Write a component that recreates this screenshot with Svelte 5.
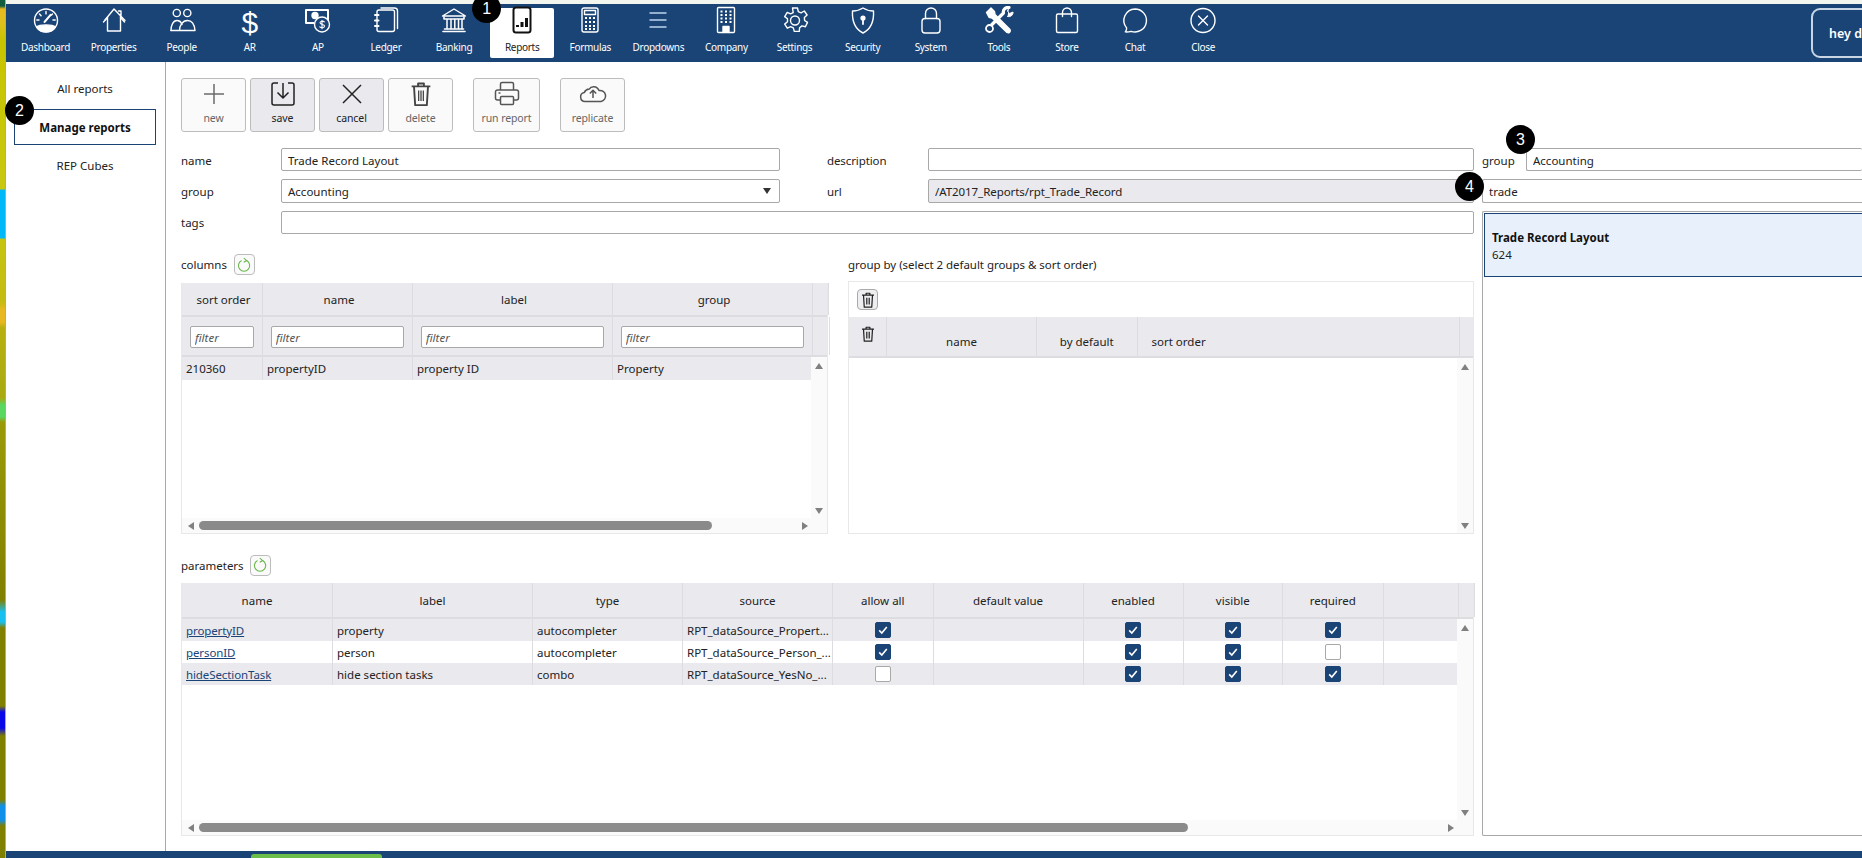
<script lang="ts">
  const navItems = ['Dashboard', 'Properties', 'People', 'AR', 'AP', 'Ledger', 'Banking', 'Reports', 'Formulas', 'Dropdowns', 'Company', 'Settings', 'Security', 'System', 'Tools', 'Store', 'Chat', 'Close'];

  const columnCols = [81, 150, 200, 200];
  const columnHead = ['sort order', 'name', 'label', 'group'];
  const columnRow = ['210360', 'propertyID', 'property ID', 'Property'];

  const groupCols = [150, 100.5, 322.5];

  const paramCols = [151, 200, 150, 150, 100.5, 150, 100, 99.5, 100.5, 75.5];
  const paramHead = ['name', 'label', 'type', 'source', 'allow all', 'default value', 'enabled', 'visible', 'required', ''];
  const params = [
    { name: 'propertyID', label: 'property', type: 'autocompleter', source: 'RPT_dataSource_Propert...', allow: true, enabled: true, visible: true, required: true },
    { name: 'personID', label: 'person', type: 'autocompleter', source: 'RPT_dataSource_Person_...', allow: true, enabled: true, visible: true, required: false },
    { name: 'hideSectionTask', label: 'hide section tasks', type: 'combo', source: 'RPT_dataSource_YesNo_...', allow: false, enabled: true, visible: true, required: true }
  ];

  function cols(list: number[]) {
    return list.map((c) => c + 'px').join(' ');
  }
</script>

{#snippet trash(size = 24)}
  <svg width={size} height={size} viewBox="0 0 24 24" fill="none" stroke="currentColor" stroke-width="1.6">
    <path d="M4 5.5h16M9.5 5.5V3h5v2.5M6 5.5l1 16h10l1-16" stroke-linejoin="round" />
    <path d="M10 9v9M12 9v9M14 9v9" stroke-width="1.1" />
  </svg>
{/snippet}

{#snippet refresh()}
  <button class="refresh" aria-label="refresh">
    <svg width="14" height="16" viewBox="0 0 14 16" fill="none" stroke="#6cb84f" stroke-width="1.1">
      <path d="M4.5 3.6A5.6 5.6 0 1 0 9.6 3.6" />
      <path d="M6.8 1.2l2.9 2.4-3 1.6" />
    </svg>
  </button>
{/snippet}

{#snippet check(on: boolean)}
  <span class="check" class:on>
    {#if on}
      <svg width="12" height="12" viewBox="0 0 12 12" fill="none" stroke="#fff" stroke-width="1.6"><path d="M2.2 6.4l2.6 2.6 5-6" /></svg>
    {/if}
  </span>
{/snippet}

{#snippet hbar(left: number, thumb: number)}
  <div class="hbar">
    <span class="arr to-left"></span>
    <span class="thumb" style="margin-left: {left}px; width: {thumb}px"></span>
    <span class="arr to-right"></span>
  </div>
{/snippet}

{#snippet navIcon(name: string)}
  {#if name === 'AR'}
    <span class="dollar">$</span>
  {:else}
    <svg width="32" height="28" viewBox="0 0 32 28" fill="none" stroke="currentColor" stroke-width="1.4" stroke-linejoin="round" stroke-linecap="round">
      {#if name === 'Dashboard'}
        <circle cx="16" cy="14" r="11.5" />
        <path d="M6.6 20.5c3-2.8 15.8-2.8 18.8 0A11.5 11.5 0 0 1 6.6 20.5z" fill="currentColor" />
        <path d="M14.6 15.4l6-7" stroke-width="2.2" />
        <path d="M16 5v2.4M9.5 7.5l1.6 1.7M22.5 7.5l-1 1M6.8 13.5h2.2M25.2 13.5H23" />
      {:else if name === 'Properties'}
        <path d="M7 13.5L16 2.5l11 11.5M9.5 11v13.5h13V8M23 9V4.5h-2.5" />
        <path d="M5.5 15.5L9.5 11M26.5 15.5L22.5 11" />
      {:else if name === 'People'}
        <circle cx="10.8" cy="6.5" r="3.6" />
        <circle cx="21.3" cy="6.5" r="3.6" />
        <path d="M5 24c0-5 2-10 6-10s4 2 5 4" />
        <path d="M5 24h9M13.5 24c0-5 3-10 8-10s7 5 7.5 10z" />
      {:else if name === 'AP'}
        <path d="M4 3.5h22v14h-5M4 3.5v13h8" stroke-width="2" />
        <circle cx="13" cy="9" r="3" fill="currentColor" />
        <circle cx="20" cy="18" r="7.5" fill="#1a4476" />
        <path d="M22.3 15.4c-1-1.2-4.3-1-4.3.9 0 2.2 4.5 1.2 4.5 3.3 0 1.9-3.4 2.1-4.7.8M20 13.8v8.4" stroke-width="1.1" />
      {:else if name === 'Ledger'}
        <path d="M9 3.5h13.5a2 2 0 0 1 2 2V23a2 2 0 0 1-2 2H9a2 2 0 0 1-2-2V5.5a2 2 0 0 1 2-2z" />
        <path d="M11 1.5h13.5a3 3 0 0 1 3 3V22" />
        <path d="M5 8.5h3.5M5 14h3.5M5 19.5h3.5" stroke-width="2" />
      {:else if name === 'Banking'}
        <path d="M4.5 9.5L16 2.5l11.5 7z" />
        <path d="M6 10.5v2h20v-2M5 25h22M6.5 22.5h19" stroke-width="1.6" />
        <path d="M9 13v9M13 13v9M16.8 13v9M20.5 13v9M24 13v9" stroke-width="1.5" />
      {:else if name === 'Reports'}
        <rect x="7.5" y="1" width="17" height="25" rx="2.5" stroke="#111" stroke-width="2" />
        <path d="M11.5 20.5v-2M16 20.5v-5M20.5 20.5v-9" stroke="#111" stroke-width="3" stroke-linecap="butt" />
      {:else if name === 'Formulas'}
        <rect x="8" y="1.5" width="16" height="24" rx="2" />
        <rect x="10.5" y="4" width="11" height="4" />
        <path d="M11 11.5h2M15 11.5h2M19 11.5h2M11 15.5h2M15 15.5h2M19 15.5h2M11 19.5h2M15 19.5h2M19 19.5h2M11 22.5h2M15 22.5h2M19 22.5h2" stroke-width="2" stroke-linecap="butt" />
      {:else if name === 'Dropdowns'}
        <path d="M7.5 6.5h17M7.5 13.5h17M7.5 20.5h17" stroke="#bcd3ee" stroke-width="1.7" stroke-linecap="butt" />
      {:else if name === 'Company'}
        <rect x="7.5" y="1" width="17" height="25" rx="1" />
        <path d="M10.5 5h2M15 5h2M19.5 5h2M10.5 8.5h2M15 8.5h2M19.5 8.5h2M10.5 12h2M15 12h2M19.5 12h2M10.5 15.5h2M15 15.5h2M19.5 15.5h2" stroke-width="2.2" stroke-linecap="butt" />
        <path d="M13 26v-6h6v6" fill="currentColor" />
      {:else if name === 'Settings'}
        <path d="M13.5 1.5h5l.8 3.6 2.7 1.2 3.3-1.8 2.8 4-2.7 2.6.2 2.9 2.9 1.9-2.1 4.4-3.5-.9-2.3 1.9-.3 3.6h-5l-1-3.5-2.7-1.3-3.3 1.6-2.6-4.1 2.8-2.3v-3l-2.8-2.2 2.5-4.2 3.4 1.5 2.6-1.3z" />
        <circle cx="16" cy="14" r="4.5" />
      {:else if name === 'Security'}
        <path d="M16 1.5c3 2 7 3 10.5 3 .5 9-1.5 17.5-10.5 22C7 22 5 13.5 5.5 4.500c3.5 0 7.5-1 10.5-3z" />
        <circle cx="16" cy="11.5" r="1.9" fill="currentColor" />
        <path d="M16 12v5.5" stroke-width="1.8" />
      {:else if name === 'System'}
        <rect x="7" y="12" width="18" height="14.5" rx="3" />
        <path d="M10.5 12V7a5.5 5.5 0 0 1 11 0v5" />
      {:else if name === 'Tools'}
        <path d="M6 1.5l3.5 3.5.5 3 15 15a2.2 2.2 0 0 1-3 3L7 11.5l-3-.8L1.5 6z" fill="currentColor" transform="translate(2 0)" />
        <path d="M26 1c-3-.5-6.500 2-5.500 5.500L9 18" stroke-width="3.2" />
        <path d="M26 1l-1.500 3.500 2 2.500L30 5.500c.3 3-2.500 5.500-5.500 4.500" fill="currentColor" stroke-width="1" />
        <circle cx="6.5" cy="22" r="3.5" stroke-width="1.8" />
      {:else if name === 'Store'}
        <rect x="5.5" y="7.5" width="21" height="18.5" rx="1.5" />
        <path d="M11.5 10V6a4.5 4.5 0 0 1 9 0v4" />
      {:else if name === 'Chat'}
        <path d="M16 2.5a11.5 11.5 0 1 1-4 22.3c-1.9.6-3.8.9-5.7.6 1.1-1.2 1.5-2.4 1.3-4A11.5 11.5 0 0 1 16 2.5z" />
      {:else if name === 'Close'}
        <circle cx="16" cy="14" r="12" />
        <path d="M11.5 9.5l9 9M20.5 9.5l-9 9" />
      {/if}
    </svg>
  {/if}
{/snippet}

<div class="page">
  <div class="strip"></div>
  <div class="shell">
    <div class="topline"></div>
    <nav class="nav">
      {#each navItems as item}
        <div class="nav-item" class:active={item === 'Reports'}>
          {@render navIcon(item)}
          <span class="nav-label">{item}</span>
          {#if item === 'Reports'}<span class="badge b1">1</span>{/if}
        </div>
      {/each}
      <div class="hey">hey d</div>
    </nav>

    <div class="main">
      <aside class="side">
        <div class="side-item">All reports</div>
        <div class="side-item current">Manage reports<span class="badge b2">2</span></div>
        <div class="side-item">REP Cubes</div>
      </aside>

      <div class="content">
        <div class="col-main">
          <div class="toolbar">
            <button class="tool"><svg width="28" height="28" viewBox="0 0 28 28" fill="none" stroke="#6b6b6b" stroke-width="1.5"><path d="M14 4v20M4 14h20" /></svg><span>new</span></button>
            <button class="tool on"><svg width="28" height="28" viewBox="0 0 28 28" fill="none" stroke="#222" stroke-width="1.5" stroke-linejoin="round"><path d="M9 3H5a2 2 0 0 0-2 2v18a2 2 0 0 0 2 2h18a2 2 0 0 0 2-2V5a2 2 0 0 0-2-2h-4M14 3v15M8.5 12.5L14 18l5.500-5.500" /></svg><span>save</span></button>
            <button class="tool on"><svg width="28" height="28" viewBox="0 0 28 28" fill="none" stroke="#222" stroke-width="1.5"><path d="M5 5l18 18M23 5L5 23" /></svg><span>cancel</span></button>
            <button class="tool trash-tool">{@render trash(28)}<span>delete</span></button>
            <button class="tool wide gap"><svg width="28" height="28" viewBox="0 0 28 28" fill="none" stroke="#555" stroke-width="1.5" stroke-linejoin="round"><path d="M7.5 10V4A1.5 1.5 0 0 1 9 2.5h10A1.5 1.5 0 0 1 20.5 4v6M7.5 20h-3a2 2 0 0 1-2-2v-6a2 2 0 0 1 2-2h19a2 2 0 0 1 2 2v6a2 2 0 0 1-2 2h-3" /><rect x="7.5" y="16.5" width="13" height="8" rx="1" /><path d="M5.5 13h2" /></svg><span>run report</span></button>
            <button class="tool gap"><svg width="28" height="28" viewBox="0 0 28 28" fill="none" stroke="#555" stroke-width="1.5" stroke-linejoin="round"><path d="M8 21.5H6a4.5 4.5 0 0 1-.8-8.9 6 6 0 0 1 5-3.5C12 6 18 5.500 20 10.500a5.500 5.500 0 0 1 2 11zM8 21.5h12" /><path d="M14 18v-7.5M10.8 13.5L14 10.3l3.2 3.2" /></svg><span>replicate</span></button>
          </div>

          <div class="form">
            <label class="first" for="f-name">name</label>
            <input id="f-name" class="first" value="Trade Record Layout" />
            <label class="l2 first" for="f-desc">description</label>
            <input id="f-desc" />

            <label for="f-group">group</label>
            <div class="select" id="f-group">Accounting<span class="caret"></span></div>
            <label class="l2" for="f-url">url</label>
            <input id="f-url" class="ro" value="/AT2017_Reports/rpt_Trade_Record" readonly />

            <label for="f-tags">tags</label>
            <input id="f-tags" class="span3" />
          </div>

          <div class="pair">
            <section>
              <div class="caption">columns {@render refresh()}</div>
              <div class="tbl columns">
                <div class="row head tall" style="grid-template-columns: {cols(columnCols)} 16px">
                  {#each columnHead as h}<div class="cell center">{h}</div>{/each}
                  <div class="cell"></div>
                </div>
                <div class="row head filter" style="grid-template-columns: {cols(columnCols)} 16px">
                  {#each columnHead as _}<div class="cell"><input class="flt" placeholder="filter" /></div>{/each}
                  <div class="cell"></div>
                </div>
                <div class="body">
                  <div class="rows">
                    <div class="row alt" style="grid-template-columns: {cols(columnCols)}">
                      {#each columnRow as c}<div class="cell">{c}</div>{/each}
                    </div>
                  </div>
                  <div class="vbar"><span class="arr up"></span><span class="arr down"></span></div>
                </div>
                {@render hbar(5, 513)}
              </div>
            </section>

            <section class="groupby">
              <div class="caption plain">group by (select 2 default groups &amp; sort order)</div>
              <div class="tbl groups">
                <div class="gtools"><button class="ico" aria-label="delete">{@render trash(18)}</button></div>
                <div class="ghead">
                  <div class="cell gicon">{@render trash(18)}</div>
                  {#each ['name', 'by default'] as h, i}<div class="cell center low" style="width: {groupCols[i]}px">{h}</div>{/each}
                  <div class="cell low pad12" style="width: {groupCols[2]}px">sort order</div>
                  <div class="cell last"></div>
                </div>
                <div class="body">
                  <div class="rows"></div>
                  <div class="vbar"><span class="arr up"></span><span class="arr down"></span></div>
                </div>
              </div>
            </section>
          </div>

          <section class="params">
            <div class="caption">parameters {@render refresh()}</div>
            <div class="tbl ptable">
              <div class="row head phead" style="grid-template-columns: {cols(paramCols)} 16px">
                {#each paramHead as h}<div class="cell center">{h}</div>{/each}
                <div class="cell"></div>
              </div>
              <div class="body">
                <div class="rows">
                  {#each params as p, i}
                    <div class="row prow" class:alt={i % 2 === 0} style="grid-template-columns: {cols(paramCols)}">
                      <div class="cell"><span class="link">{p.name}</span></div>
                      <div class="cell">{p.label}</div>
                      <div class="cell">{p.type}</div>
                      <div class="cell">{p.source}</div>
                      <div class="cell center">{@render check(p.allow)}</div>
                      <div class="cell"></div>
                      <div class="cell center">{@render check(p.enabled)}</div>
                      <div class="cell center">{@render check(p.visible)}</div>
                      <div class="cell center">{@render check(p.required)}</div>
                      <div class="cell"></div>
                    </div>
                  {/each}
                </div>
                <div class="vbar"><span class="arr up"></span><span class="arr down"></span></div>
              </div>
              {@render hbar(5, 989)}
            </div>
          </section>
        </div>

        <div class="col-side">
          <div class="r-group">
            <label class="first" for="r-g">group</label>
            <input id="r-g" class="first" value="Accounting" />
            <span class="badge b3">3</span>
          </div>
          <div class="r-search">
            <input value="trade" />
            <span class="badge b4">4</span>
          </div>
          <div class="r-list">
            <div class="r-card">
              <b>Trade Record Layout</b>
              <span>624</span>
            </div>
          </div>
        </div>
      </div>
    </div>

    <div class="footer"><span class="green"></span></div>
  </div>
</div>

<style>
  :global(body) {
    margin: 0;
    overflow: hidden;
  }

  .page {
    display: flex;
    width: 1862px;
    height: 858px;
    overflow: hidden;
    font-family: "Noto Sans", sans-serif;
    font-size: 11.5px;
    color: #222;
    background: #fff;
  }

  /* sliver of the desktop behind the window */
  .strip {
    flex: 0 0 6px;
    box-sizing: border-box;
    border-right: 1px solid #aaa;
    background: linear-gradient(180deg,
      #145c40 0, #145c40 6px, #e8b820 9px, #e0c020 22px, #c8c400 40px, #c8c810 189px,
      #00b8f8 190px, #00b8f8 238px,
      #c6c410 239px, #c4bc10 302px, #e8b820 310px, #e8b820 322px,
      #b8b010 328px, #a8aa10 398px, #58d860 405px, #58d860 417px,
      #9a9a08 422px, #808000 600px, #18c0f0 612px, #18c0f0 622px,
      #808000 628px, #808000 706px, #0808e8 712px, #0808e8 728px,
      #808000 736px, #808000 800px, #1090e8 806px, #1090e8 820px,
      #808000 826px, #808000 858px);
  }

  .shell {
    flex: 1;
    display: flex;
    flex-direction: column;
    min-width: 0;
  }

  .topline {
    height: 4px;
    background: #f2f6ee;
  }

  .nav {
    height: 58px;
    flex: none;
    background: #1a4476;
    display: flex;
    align-items: center;
    gap: 4.1px;
    padding-left: 7.5px;
    position: relative;
    color: #fff;
  }

  .nav-item {
    position: relative;
    width: 64px;
    height: 50px;
    flex: none;
    display: flex;
    flex-direction: column;
    align-items: center;
    border-radius: 2px;
    color: #fff;
  }

  .nav-item svg {
    margin-top: -2px;
    height: 29px;
    flex: none;
  }

  .nav-item.active {
    background: #fff;
    color: #222;
  }

  .nav-label {
    font-size: 10px;
    line-height: 14px;
    margin-top: 5px;
    white-space: nowrap;
    letter-spacing: -0.3px;
  }

  .dollar {
    font: 30px/29px "Liberation Sans", sans-serif;
    height: 27px;
  }

  .hey {
    position: absolute;
    left: 1805px;
    top: 4px;
    width: 80px;
    height: 50px;
    box-sizing: border-box;
    border: 2px solid #c9d6e6;
    border-radius: 9px;
    display: flex;
    align-items: center;
    padding-left: 16px;
    font-weight: 600;
    font-size: 12.5px;
  }

  .badge {
    position: absolute;
    width: 29px;
    height: 29px;
    border-radius: 50%;
    background: #000;
    color: #fff;
    display: flex;
    align-items: center;
    justify-content: center;
    font: 400 16px "Liberation Sans", sans-serif;
    z-index: 5;
  }

  .b1 { left: -18px; top: -14px; }
  .b2 { left: -10px; top: -14px; }
  .b3 { left: 24px; top: -23px; }
  .b4 { left: -27px; top: -7px; }

  .main {
    flex: 1;
    display: flex;
    min-height: 0;
  }

  .side {
    width: 160px;
    flex: none;
    box-sizing: border-box;
    border-right: 1px solid #a8a8a8;
    padding: 15px 9px 0 8px;
    display: flex;
    flex-direction: column;
  }

  .side-item {
    position: relative;
    height: 22px;
    display: flex;
    align-items: center;
    justify-content: center;
    font-size: 11.5px;
  }

  .side-item.current {
    height: 34px;
    margin: 10px 0 9px;
    border: 1px solid #1a4476;
    font-weight: 700;
    color: #111;
  }

  .content {
    flex: 1;
    display: flex;
    gap: 8px;
    padding: 16px 0 0 15px;
    min-width: 0;
  }

  .col-main {
    width: 1293px;
    flex: none;
  }

  .toolbar {
    display: flex;
    gap: 4px;
    height: 54px;
  }

  .tool {
    width: 65px;
    height: 54px;
    padding: 1px 0 0;
    box-sizing: border-box;
    border: 1px solid #bcbcbc;
    border-radius: 3px;
    background: #fafafa;
    color: #666;
    font: 10.5px "Noto Sans", sans-serif;
    display: flex;
    flex-direction: column;
    align-items: center;
    gap: 3px;
  }

  .tool span { letter-spacing: -0.1px; }
  .tool.on { background: #e9e9ee; color: #222; }
  .tool.wide { width: 67px; }
  .tool.gap { margin-left: 16px; }
  .trash-tool { color: #444; }
  .trash-tool span { color: #666; }

  .form {
    display: grid;
    grid-template-columns: 100px 499px 47px 101px 546px;
    grid-template-rows: 23px 24px 23px;
    row-gap: 8px;
    margin-top: 16px;
    align-items: center;
  }

  .form label { grid-column: 1; }
  .form .l2 { grid-column: 4; letter-spacing: -0.1px; }
  .form input, .form .select { height: 100%; }
  .form .span3 { grid-column: 2 / 6; }
  .form #f-desc, .form #f-url { grid-column: 5; }
  .form #f-url { letter-spacing: -0.06px; }

  label.first, input.first { padding-top: 1px; }

  input, .select {
    box-sizing: border-box;
    width: 100%;
    border: 1px solid #a8a8a8;
    border-radius: 2px;
    padding: 0 6px;
    font: 11.5px "Noto Sans", sans-serif;
    color: #222;
    background: #fff;
    outline: none;
  }

  .ro { background: #e9e9ee; }

  .select {
    display: flex;
    align-items: center;
    justify-content: space-between;
    padding-right: 8px;
  }

  .caret {
    width: 0;
    height: 0;
    border: 4.5px solid transparent;
    border-top: 6px solid #333;
    border-bottom: 0;
  }

  .pair {
    display: grid;
    grid-template-columns: 647px 626px;
    gap: 20px;
    margin-top: 20px;
  }

  .caption {
    height: 21px;
    display: flex;
    align-items: center;
    gap: 7px;
    margin-bottom: 8px;
  }

  .caption.plain {
    height: 20px;
    margin-bottom: 7px;
    letter-spacing: -0.03px;
  }

  .refresh, .ico {
    box-sizing: border-box;
    width: 21px;
    height: 21px;
    padding: 0;
    border: 1px solid #bcbcbc;
    border-radius: 4px;
    background: #fafafa;
    display: flex;
    align-items: center;
    justify-content: center;
  }

  .ico { background: #eeeef1; color: #222; border-color: #aaa; }

  .tbl {
    box-sizing: border-box;
    border: 1px solid #e8e8e8;
    border-top: 0;
    display: flex;
    flex-direction: column;
  }

  .columns { height: 251px; }

  .groups {
    height: 253px;
    border-top: 1px solid #e8e8e8;
  }

  .ptable { height: 253px; }

  .row { display: grid; }

  .head { background: #e9e9ee; }
  .head .cell { border-right: 1px solid #dcdce1; }
  .tall { height: 34px; border-bottom: 2px solid #dcdce1; box-sizing: border-box; }
  .tall .cell { padding: 1px 3px 0 6px; }
  .filter { height: 40px; border-bottom: 2px solid #dcdce1; box-sizing: border-box; }
  .phead { height: 36px; border-bottom: 2px solid #dcdce1; box-sizing: border-box; }

  .cell {
    display: flex;
    align-items: center;
    padding: 0 4px;
    box-sizing: border-box;
    font-size: 11.5px;
    white-space: nowrap;
    overflow: hidden;
    border-right: 1px solid #dcdce1;
  }

  .cell.center { justify-content: center; }

  .filter .cell { padding: 2px 8px 0; }

  .flt {
    height: 22px;
    padding: 0 4px;
    font-style: italic;
  }

  .flt::placeholder { color: #555; opacity: 1; }

  .alt { background: #e9e9ee; }
  .columns .alt { height: 23px; }
  .prow { height: 22px; }

  .body {
    flex: 1;
    display: flex;
    min-height: 0;
  }

  .rows { flex: 1; min-width: 0; }

  .vbar {
    width: 16px;
    flex: none;
    background: #fafafa;
    display: flex;
    flex-direction: column;
    justify-content: space-between;
    align-items: center;
    padding: 6px 0 4px;
    box-sizing: border-box;
  }

  .hbar {
    height: 15px;
    flex: none;
    background: #fafafa;
    display: flex;
    align-items: center;
    padding: 0 6px;
  }

  .thumb {
    height: 9px;
    border-radius: 5px;
    background: #8a8a8a;
  }

  .arr { width: 0; height: 0; border: 4px solid transparent; flex: none; }
  .arr.up { border-top: 0; border-bottom: 6px solid #808080; }
  .arr.down { border-bottom: 0; border-top: 6px solid #808080; }
  .arr.to-left { border-left: 0; border-right: 6px solid #808080; }
  .arr.to-right { border-right: 0; border-left: 6px solid #808080; margin-left: auto; margin-right: 13px; }

  .gtools {
    height: 35px;
    padding: 7px 8px 0;
    box-sizing: border-box;
  }

  .ghead {
    height: 41px;
    flex: none;
    display: flex;
    background: #e9e9ee;
    border-bottom: 2px solid #dcdce1;
    box-sizing: border-box;
  }

  .ghead .cell { flex: none; }
  .gicon { width: 38px; justify-content: center; padding: 0 0 6px; }
  .low { padding-top: 10px; }
  .pad12 { padding-left: 14px; }
  .last { flex: 1 !important; border-right: 0; }

  .params { margin-top: 21px; }
  .params .caption { height: 20px; margin-bottom: 8px; gap: 6px; }

  .link {
    color: #1a4476;
    text-decoration: underline;
    letter-spacing: -0.1px;
  }

  .check {
    box-sizing: border-box;
    width: 16px;
    height: 16px;
    border: 1px solid #a8a8a8;
    border-radius: 2px;
    background: #fff;
    display: flex;
    align-items: center;
    justify-content: center;
  }

  .check.on {
    background: #1a4476;
    border-color: #1a4476;
  }

  .col-side {
    flex: 1;
    min-width: 0;
    padding-top: 70px;
    display: flex;
    flex-direction: column;
    gap: 8px;
  }

  .r-group {
    position: relative;
    height: 23px;
    display: flex;
    align-items: center;
  }

  .r-group label { width: 44px; flex: none; }
  .r-group input { height: 100%; width: 400px; border-right: 0; }

  .r-search {
    position: relative;
    height: 24px;
  }

  .r-search input { height: 100%; width: 400px; border-right: 0; }

  .r-list {
    height: 625px;
    box-sizing: border-box;
    border: 1px solid #a8a8a8;
    border-right: 0;
    border-radius: 2px 0 0 2px;
    padding: 1px 0 0 1px;
    width: 400px;
  }

  .r-card {
    height: 64px;
    box-sizing: border-box;
    background: #e8f1fb;
    border: 1px solid #1a4476;
    border-right: 0;
    padding: 16px 7px 0;
    display: flex;
    flex-direction: column;
    gap: 2px;
  }

  .r-card b { font-weight: 700; color: #111; }

  .footer {
    height: 7px;
    flex: none;
    background: #1a4476;
    padding-left: 245px;
    display: flex;
    align-items: flex-end;
  }

  .green {
    width: 131px;
    height: 4px;
    background: #6cbe4b;
    border-radius: 3px 3px 0 0;
  }
</style>
